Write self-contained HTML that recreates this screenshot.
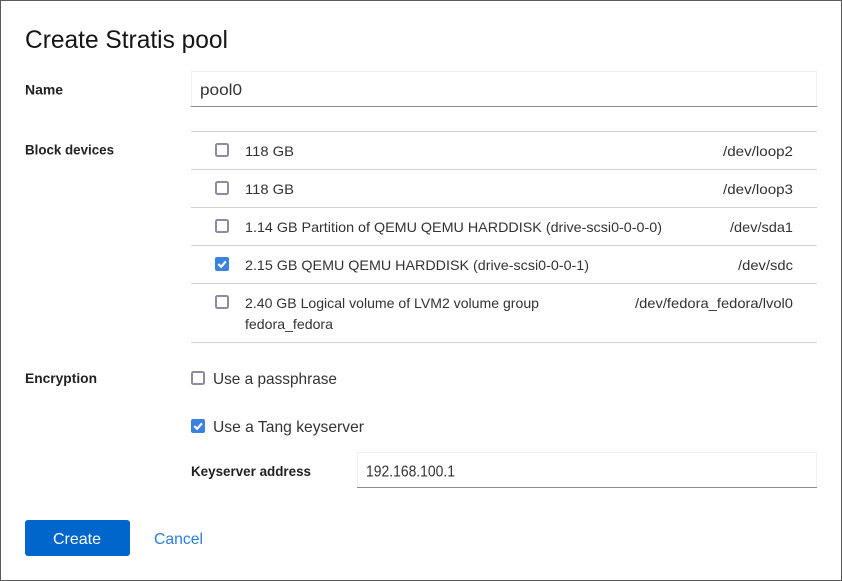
<!DOCTYPE html>
<html><head><meta charset="utf-8"><title>Create Stratis pool</title>
<style>
html,body{margin:0;padding:0;background:#fff;width:842px;height:581px;overflow:hidden}
svg{display:block;font-family:"Liberation Sans",sans-serif}
text{fill:#151515}
.t{font-size:14px;fill:#333}
.b{font-size:13.5px;font-weight:bold;fill:#222}
.m{font-size:16px;fill:#333}
</style></head><body>
<svg width="842" height="581" viewBox="0 0 842 581" xmlns="http://www.w3.org/2000/svg">
<rect x="0.5" y="0.5" width="841" height="580" fill="#fff" stroke="#5a5a5a"/>
<text x="25" y="48" font-size="25" textLength="203" lengthAdjust="spacingAndGlyphs">Create Stratis pool</text>

<text class="b" x="25" y="94.5" textLength="38" lengthAdjust="spacingAndGlyphs">Name</text>
<rect x="191.5" y="71.5" width="625" height="35" fill="#fff" stroke="#f0f0f0"/>
<rect x="191" y="106" width="626" height="1" fill="#8a8d90"/>
<text class="m" x="200" y="95" font-size="17" textLength="42" lengthAdjust="spacingAndGlyphs">pool0</text>

<text class="b" x="25" y="154.5" textLength="89" lengthAdjust="spacingAndGlyphs">Block devices</text>
<g fill="#d2d2d2">
<rect x="191" y="131" width="626" height="1"/>
<rect x="191" y="169" width="626" height="1"/>
<rect x="191" y="207" width="626" height="1"/>
<rect x="191" y="245" width="626" height="1"/>
<rect x="191" y="283" width="626" height="1"/>
<rect x="191" y="342" width="626" height="1"/>
</g>

<g fill="#fff" stroke="#8b8d9f" stroke-width="2">
<rect x="216" y="144" width="12" height="12" rx="1.5"/>
<rect x="216" y="182" width="12" height="12" rx="1.5"/>
<rect x="216" y="220" width="12" height="12" rx="1.5"/>
<rect x="216" y="296" width="12" height="12" rx="1.5"/>
<rect x="192" y="372" width="12" height="12" rx="1.5"/>
</g>
<rect x="215" y="257" width="14" height="14" rx="2" fill="#3b82e0"/>
<path d="M218.3 264l2.8 2.8 4.8-5.4" fill="none" stroke="#fff" stroke-width="2.2"/>
<rect x="191" y="419" width="14" height="14" rx="2" fill="#3b82e0"/>
<path d="M194.3 426l2.8 2.8 4.8-5.4" fill="none" stroke="#fff" stroke-width="2.2"/>

<text class="t" x="245" y="156" textLength="49" lengthAdjust="spacingAndGlyphs">118 GB</text>
<text class="t" x="245" y="194" textLength="49" lengthAdjust="spacingAndGlyphs">118 GB</text>
<text class="t" x="245" y="232" textLength="417" lengthAdjust="spacingAndGlyphs">1.14 GB Partition of QEMU QEMU HARDDISK (drive-scsi0-0-0-0)</text>
<text class="t" x="245" y="270" textLength="344" lengthAdjust="spacingAndGlyphs">2.15 GB QEMU QEMU HARDDISK (drive-scsi0-0-0-1)</text>
<text class="t" x="245" y="308" textLength="294" lengthAdjust="spacingAndGlyphs">2.40 GB Logical volume of LVM2 volume group</text>
<text class="t" x="245" y="329" textLength="88" lengthAdjust="spacingAndGlyphs">fedora_fedora</text>

<text class="t" x="723" y="156" textLength="70" lengthAdjust="spacingAndGlyphs">/dev/loop2</text>
<text class="t" x="723" y="194" textLength="70" lengthAdjust="spacingAndGlyphs">/dev/loop3</text>
<text class="t" x="730" y="232" textLength="63" lengthAdjust="spacingAndGlyphs">/dev/sda1</text>
<text class="t" x="738" y="270" textLength="55" lengthAdjust="spacingAndGlyphs">/dev/sdc</text>
<text class="t" x="635" y="308" textLength="158" lengthAdjust="spacingAndGlyphs">/dev/fedora_fedora/lvol0</text>

<text class="b" x="25" y="383" textLength="72" lengthAdjust="spacingAndGlyphs">Encryption</text>
<text class="m" x="213" y="384" textLength="124" lengthAdjust="spacingAndGlyphs">Use a passphrase</text>
<text class="m" x="213" y="432" textLength="151" lengthAdjust="spacingAndGlyphs">Use a Tang keyserver</text>

<text class="b" x="191" y="476" textLength="120" lengthAdjust="spacingAndGlyphs">Keyserver address</text>
<rect x="357.5" y="452.5" width="459" height="35" fill="#fff" stroke="#f0f0f0"/>
<rect x="357" y="487" width="460" height="1" fill="#8a8d90"/>
<text class="m" x="366" y="476.5" textLength="89" lengthAdjust="spacingAndGlyphs">192.168.100.1</text>

<rect x="25" y="520" width="105" height="36" rx="3" fill="#0066cc"/>
<text x="53" y="544" font-size="16" style="fill:#fff" textLength="48" lengthAdjust="spacingAndGlyphs">Create</text>
<text x="154" y="544" font-size="16" style="fill:#2b7fd9" textLength="49" lengthAdjust="spacingAndGlyphs">Cancel</text>
</svg>
</body></html>
